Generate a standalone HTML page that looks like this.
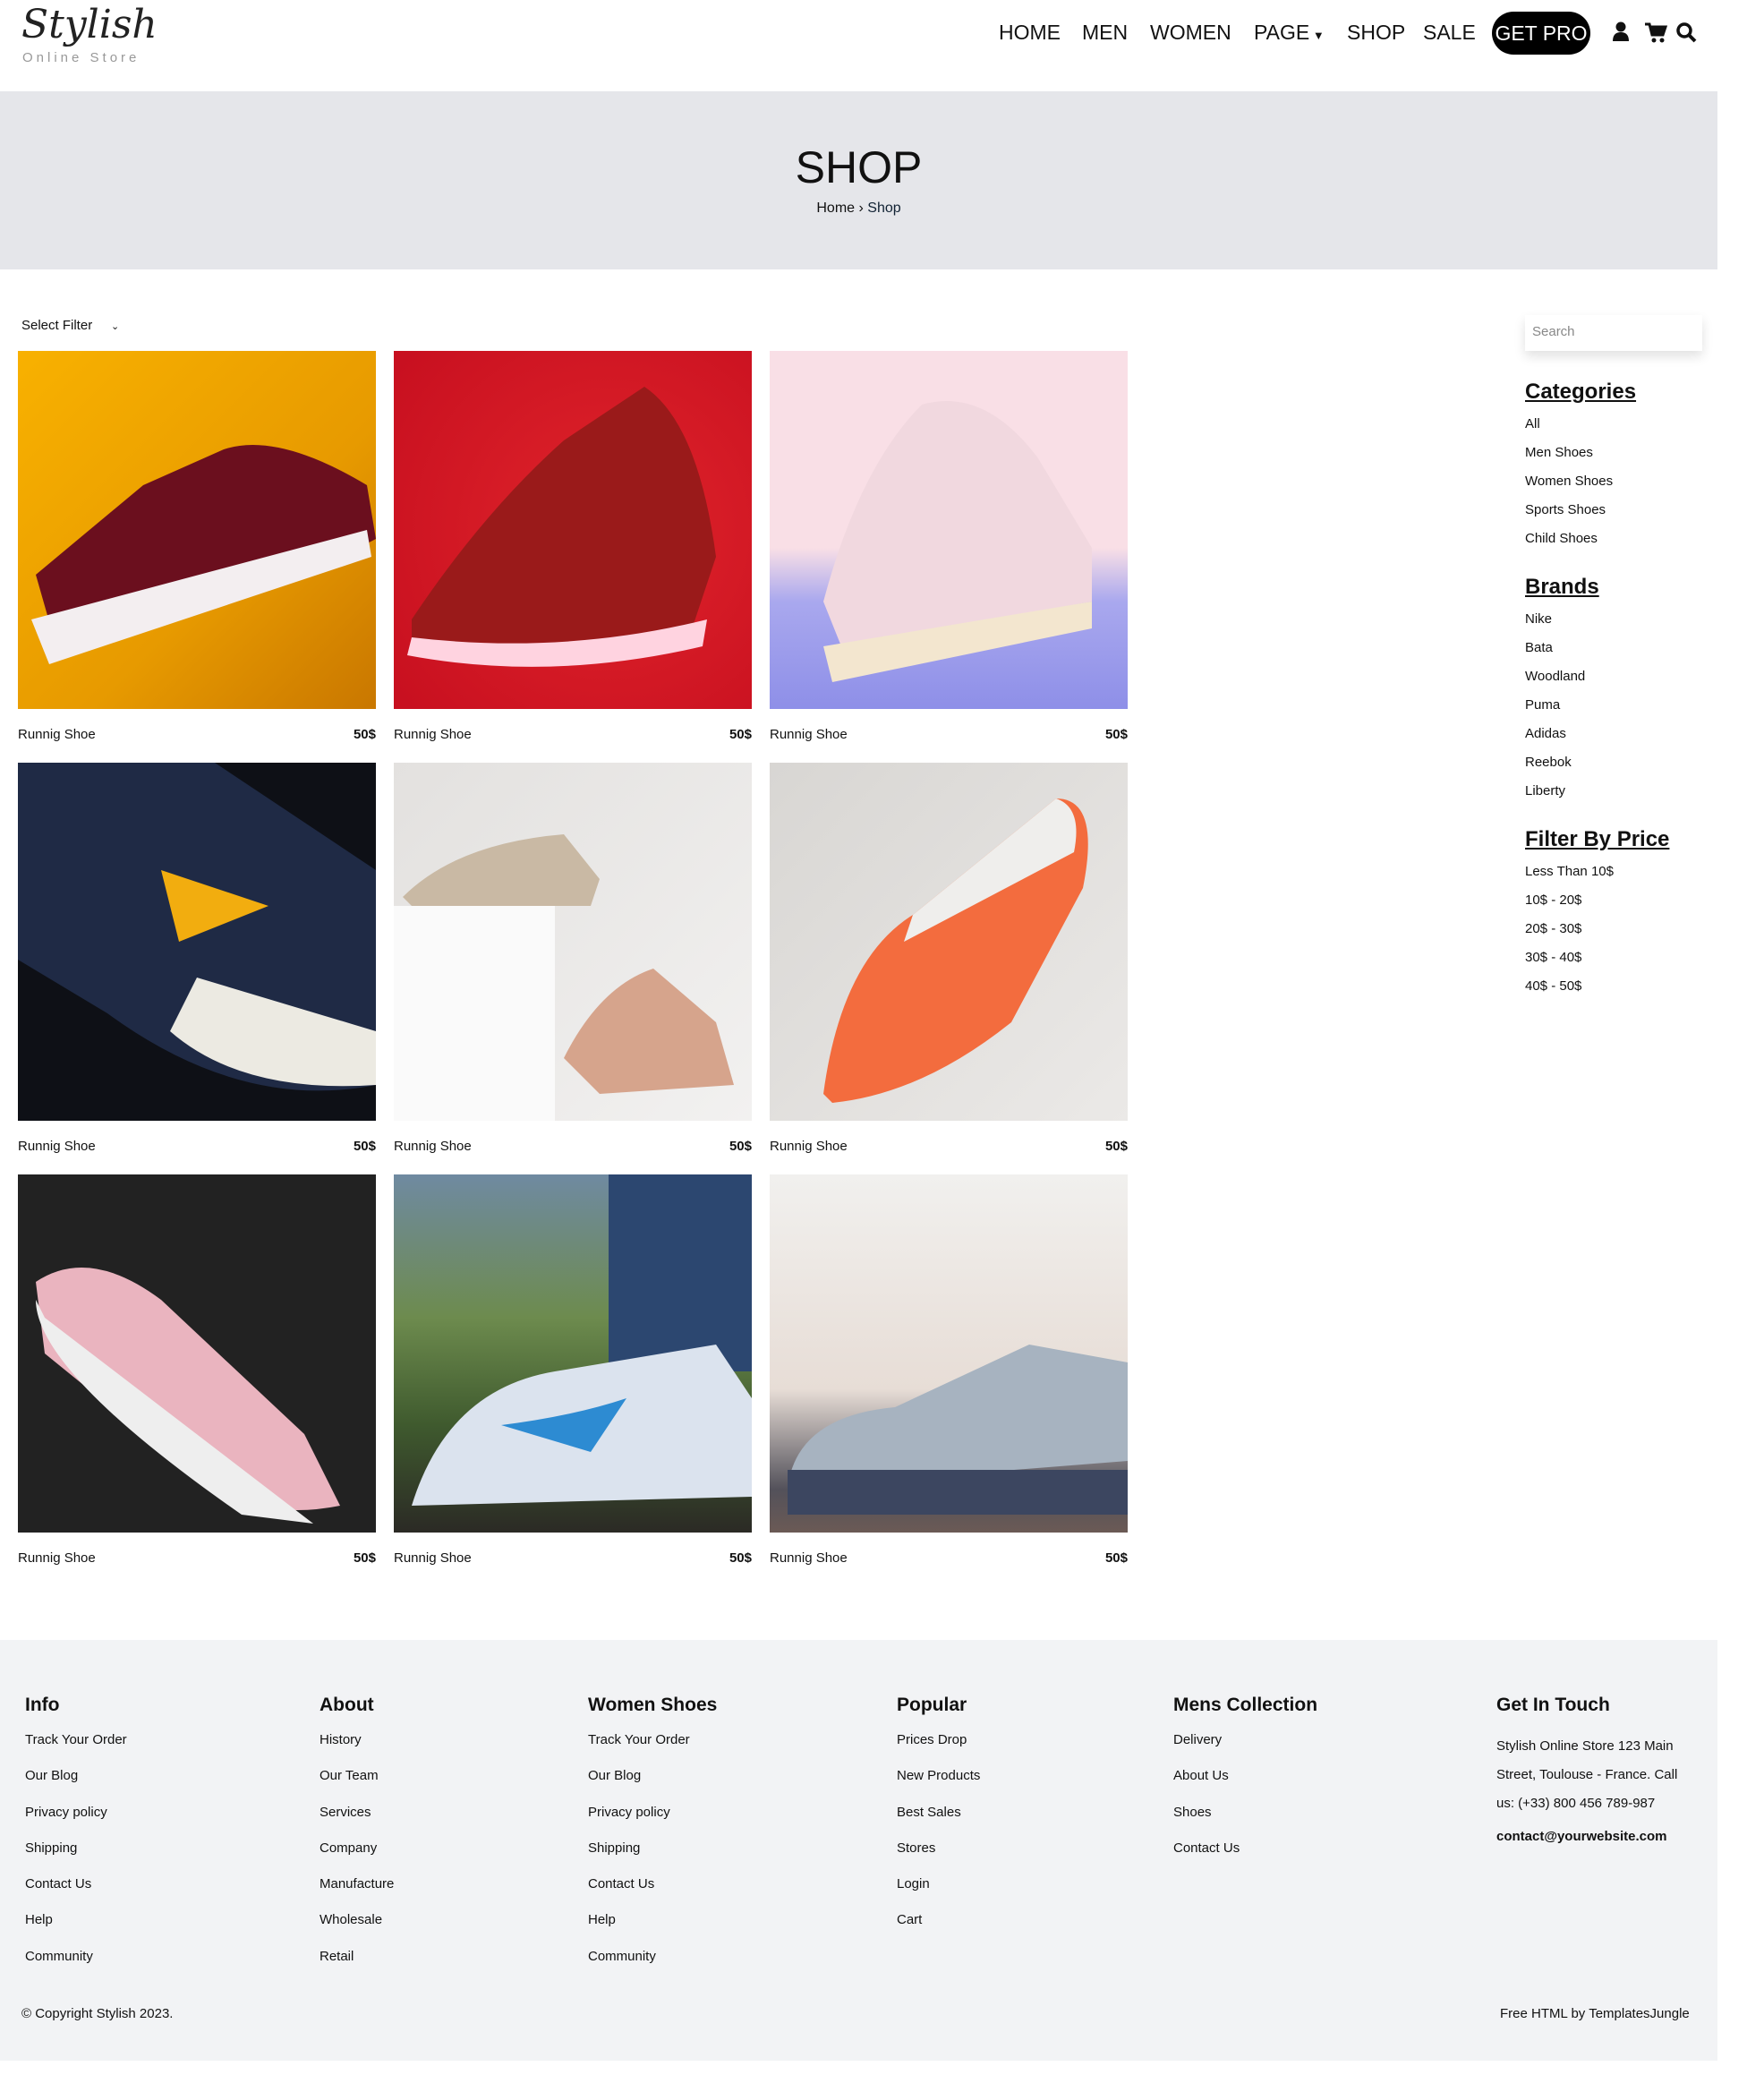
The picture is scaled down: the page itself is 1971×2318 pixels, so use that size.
<!DOCTYPE html>
<html><head><meta charset="utf-8"><style>
*{margin:0;padding:0;box-sizing:border-box}
body{width:1971px;height:2318px;background:#fff;font-family:"Liberation Sans",sans-serif;color:#111;position:relative;overflow:hidden}
.a{position:absolute}
.nav{top:23px;font-size:23px;color:#111;white-space:nowrap}
.hero{left:0;top:102px;width:1919px;height:199px;background:#e5e6ea}
.img{width:400px;height:400px;overflow:hidden}
.cap{font-size:15px;width:400px;display:flex;justify-content:space-between}
.cap b{font-weight:bold}
.side h3{font-size:24px;font-weight:bold;text-decoration:underline;margin-bottom:6px}
.side div{font-size:15px;height:32px;line-height:32px}
.foot{left:0;top:1832px;width:1919px;height:470px;background:#f2f3f5}
.col h4{font-size:21px;font-weight:bold;margin-bottom:18px}
.col div{font-size:15px;height:40.3px}
</style></head><body>
<div class="a" style="left:24px;top:2px;font-family:'DejaVu Serif',serif;font-style:italic;font-size:44px;color:#222">Stylish</div>
<div class="a" style="left:25px;top:56px;font-size:15px;letter-spacing:4px;color:#999">Online Store</div>
<div class="a nav" style="left:1116px">HOME</div>
<div class="a nav" style="left:1209px">MEN</div>
<div class="a nav" style="left:1285px">WOMEN</div>
<div class="a nav" style="left:1401px">PAGE<span style="font-size:13px"> ▼</span></div>
<div class="a nav" style="left:1505px">SHOP</div>
<div class="a nav" style="left:1590px">SALE</div>
<div class="a" style="left:1667px;top:13px;width:110px;height:48px;border-radius:24px;background:#000;color:#fff;font-size:23px;line-height:48px;text-align:center">GET PRO</div>
<svg class="a" style="left:1800px;top:24px" width="104" height="26" viewBox="0 0 104 26">
<circle cx="11" cy="6" r="5.5" fill="#111"/><path d="M2 22q0-10 9-10t9 10z" fill="#111"/>
<path d="M38 3h5l3 12h12l3-9H45" stroke="#111" stroke-width="3" fill="#111"/><circle cx="48" cy="21" r="2.5" fill="#111"/><circle cx="57" cy="21" r="2.5" fill="#111"/>
<circle cx="82" cy="10" r="7" stroke="#111" stroke-width="3.5" fill="none"/><path d="M87 15l7 7" stroke="#111" stroke-width="4"/>
</svg>
<div class="a hero"></div>
<div class="a" style="left:0;width:1919px;top:158px;text-align:center;font-size:50px">SHOP</div>
<div class="a" style="left:0;width:1919px;top:224px;text-align:center;font-size:16px">Home › <span style="color:#123">Shop</span></div>
<div class="a" style="left:24px;top:355px;font-size:15px">Select Filter &nbsp;&nbsp;&nbsp;&nbsp;<span style="font-size:11px">⌄</span></div>

<div class="a img" style="left:20px;top:392px;background:linear-gradient(135deg,#f8b100,#e79a00 60%,#c97700)"><svg width="400" height="400"><path d="M20 250q60-50 120-100l90-40q60-20 160 40l10 60q-150 80-360 110z" fill="#6b0f1e"/><path d="M15 300l375-100 5 30-360 120z" fill="#f3eef0"/></svg></div>
<div class="a img" style="left:440px;top:392px;background:radial-gradient(circle at 60% 50%,#e0242b,#c70f1f)"><svg width="400" height="400"><path d="M20 300q80-120 170-200l90-60q60 40 80 190l-30 90q-150 40-310 10z" fill="#9a1a1a"/><path d="M20 320q170 20 330-20l-5 30q-170 40-330 10z" fill="#ffd3e0"/></svg></div>
<div class="a img" style="left:860px;top:392px;background:linear-gradient(180deg,#f9dfe6 55%,#a9a8ee 70%,#8e8fe8)"><svg width="400" height="400"><path d="M60 280q40-150 110-220 70-20 130 60l60 100v60l-280 50z" fill="#f1d8df"/><path d="M60 330l300-50v30l-290 60z" fill="#f3e6cf"/></svg></div>

<div class="a img" style="left:20px;top:852px;background:#0e1016"><svg width="400" height="400"><path d="M0 0h220l180 120v240q-150 30-300-80l-100-60z" fill="#1f2a45"/><path d="M160 120l120 40-100 40z" fill="#f2ad0f"/><path d="M200 240q100 30 200 60v60q-150 10-230-60z" fill="#eceae2"/></svg></div>
<div class="a img" style="left:440px;top:852px;background:linear-gradient(135deg,#e3e1df,#f2f1f0)"><div style="position:absolute;left:0;top:160px;width:180px;height:240px;background:#fafafa"></div><svg width="400" height="400" style="position:absolute"><path d="M10 150q60-60 180-70l40 50-10 30-200 0z" fill="#c9b9a4"/><path d="M190 330q40-80 100-100l70 60 20 70-150 10z" fill="#d6a48c"/></svg></div>
<div class="a img" style="left:860px;top:852px;background:linear-gradient(135deg,#d8d6d3,#ebe9e7)"><svg width="400" height="400"><path d="M60 370q20-150 100-200l160-130q50 0 30 100l-80 150q-100 80-200 90z" fill="#f36c3e"/><path d="M160 170l160-130q30 10 20 60l-190 100z" fill="#efeeec"/></svg></div>

<div class="a img" style="left:20px;top:1312px;background:#222"><svg width="400" height="400"><path d="M20 120q60-40 140 20l160 150 40 80q-100 20-170-40l-160-130z" fill="#eab4bf"/><path d="M20 140q0 80 230 240l80 10-300-230z" fill="#eee"/></svg></div>
<div class="a img" style="left:440px;top:1312px;background:linear-gradient(180deg,#6f8aa1,#6d8b4e 40%,#3f5a2e 70%,#2b2a25)"><div style="position:absolute;left:240px;top:0;width:160px;height:220px;background:#2c4770"></div><svg width="400" height="400" style="position:absolute"><path d="M20 370q40-130 160-150l180-30 40 60v110z" fill="#dbe3ee"/><path d="M120 280q80-10 140-30l-40 60z" fill="#2d8bd2"/></svg></div>
<div class="a img" style="left:860px;top:1312px;background:linear-gradient(180deg,#f1f0ee,#e7ddd6 60%,#53515a 88%,#6b5a55)"><svg width="400" height="400"><path d="M20 350q10-80 120-90l150-70 110 20v110z" fill="#a7b3c0"/><path d="M20 330l380 0v50l-380 0z" fill="#3c4660"/></svg></div>

<div class="a cap" style="left:20px;top:812px">Runnig Shoe<b>50$</b></div>
<div class="a cap" style="left:440px;top:812px">Runnig Shoe<b>50$</b></div>
<div class="a cap" style="left:860px;top:812px">Runnig Shoe<b>50$</b></div>
<div class="a cap" style="left:20px;top:1272px">Runnig Shoe<b>50$</b></div>
<div class="a cap" style="left:440px;top:1272px">Runnig Shoe<b>50$</b></div>
<div class="a cap" style="left:860px;top:1272px">Runnig Shoe<b>50$</b></div>
<div class="a cap" style="left:20px;top:1732px">Runnig Shoe<b>50$</b></div>
<div class="a cap" style="left:440px;top:1732px">Runnig Shoe<b>50$</b></div>
<div class="a cap" style="left:860px;top:1732px">Runnig Shoe<b>50$</b></div>

<div class="a" style="left:1704px;top:352px;width:198px;height:40px;background:#fff;box-shadow:0 6px 12px rgba(0,0,0,.12);font-size:15px;color:#888;padding:10px 8px">Search</div>
<div class="a side" style="left:1704px;top:424px">
<h3>Categories</h3><div>All</div><div>Men Shoes</div><div>Women Shoes</div><div>Sports Shoes</div><div>Child Shoes</div>
<h3 style="margin-top:24px">Brands</h3><div>Nike</div><div>Bata</div><div>Woodland</div><div>Puma</div><div>Adidas</div><div>Reebok</div><div>Liberty</div>
<h3 style="margin-top:24px">Filter By Price</h3><div>Less Than 10$</div><div>10$ - 20$</div><div>20$ - 30$</div><div>30$ - 40$</div><div>40$ - 50$</div>
</div>

<div class="a foot"></div>
<div class="a col" style="left:28px;top:1893px"><h4>Info</h4><div>Track Your Order</div><div>Our Blog</div><div>Privacy policy</div><div>Shipping</div><div>Contact Us</div><div>Help</div><div>Community</div></div>
<div class="a col" style="left:357px;top:1893px"><h4>About</h4><div>History</div><div>Our Team</div><div>Services</div><div>Company</div><div>Manufacture</div><div>Wholesale</div><div>Retail</div></div>
<div class="a col" style="left:657px;top:1893px"><h4>Women Shoes</h4><div>Track Your Order</div><div>Our Blog</div><div>Privacy policy</div><div>Shipping</div><div>Contact Us</div><div>Help</div><div>Community</div></div>
<div class="a col" style="left:1002px;top:1893px"><h4>Popular</h4><div>Prices Drop</div><div>New Products</div><div>Best Sales</div><div>Stores</div><div>Login</div><div>Cart</div></div>
<div class="a col" style="left:1311px;top:1893px"><h4>Mens Collection</h4><div>Delivery</div><div>About Us</div><div>Shoes</div><div>Contact Us</div></div>
<div class="a col" style="left:1672px;top:1893px;width:226px"><h4>Get In Touch</h4><p style="font-size:15px;line-height:32px">Stylish Online Store 123 Main Street, Toulouse - France. Call us: (+33) 800 456 789-987</p><p style="font-size:15px;font-weight:bold;margin-top:12px">contact@yourwebsite.com</p></div>
<div class="a" style="left:24px;top:2241px;font-size:15px">© Copyright Stylish 2023.</div>
<div class="a" style="left:1676px;top:2241px;font-size:15px">Free HTML by TemplatesJungle</div>
</body></html>
